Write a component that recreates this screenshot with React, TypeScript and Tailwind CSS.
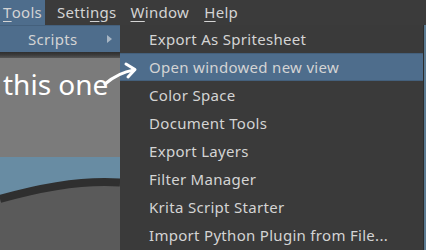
import React from "react";

const font = { fontFamily: '"Noto Sans", "Open Sans", sans-serif' };

function U({ children }: { children: React.ReactNode }) {
  return <span className="underline underline-offset-[3px] decoration-1">{children}</span>;
}

const items = [
  "Export As Spritesheet",
  "Open windowed new view",
  "Color Space",
  "Document Tools",
  "Export Layers",
  "Filter Manager",
  "Krita Script Starter",
  "Import Python Plugin from File...",
];

export default function App() {
  return (
    <div
      className="relative w-[426px] h-[250px] overflow-hidden bg-[#3a3a3a] text-[#d4d4d4] text-[15px] tracking-[0.3px] leading-none"
      style={font}
    >
      {/* menu bar */}
      <div className="flex h-[25px] items-stretch bg-[#3b3b3b]">
        <div className="flex items-center w-[45px] pl-[3px] bg-[#4e6d8c]">
          <U>T</U>ools
        </div>
        <div className="flex items-center pl-[12px]">
          Setti<U>n</U>gs
        </div>
        <div className="flex items-center pl-[14px]">
          <U>W</U>indow
        </div>
        <div className="flex items-center pl-[15px]">
          <U>H</U>elp
        </div>
      </div>

      <div className="flex h-[225px]">
        {/* left column: Tools submenu + canvas */}
        <div className="flex flex-col w-[120px] shrink-0">
          <div className="flex items-center h-[27px] bg-[#4e6d8c] pl-[28px] pr-[8px] border-t border-[#44607c]">
            <span className="flex-1">Scripts</span>
            <svg width="5" height="8" viewBox="0 0 5 8">
              <path d="M0 0 L5 4 L0 8 Z" fill="#a8b6c4" />
            </svg>
          </div>
          <div className="h-[6px] bg-gradient-to-b from-[#2e2e2e] via-[#3c3c3c] to-[#555555]" />
          <div className="flex flex-col flex-1 bg-[#7b7b7b]">
            <div className="pl-[3px] pt-[10px] text-[28px] tracking-normal leading-[32px] text-white">this one</div>
            <svg className="mt-auto" width="120" height="93" viewBox="0 0 120 93">
              <rect x="0" y="0" width="120" height="93" fill="#688ca3" />
              <path d="M0 42 Q70 22 120 25.5 L120 93 L0 93 Z" fill="#5a5a5a" />
              <path d="M0 42 Q70 22 120 25.5" stroke="#2f2f2f" strokeWidth="8" fill="none" />
            </svg>
          </div>
        </div>

        {/* Scripts submenu */}
        <div className="flex flex-col w-[304px] shrink-0 bg-[#3a3a3a] border-r border-[#2b2b2b]">
          {items.map((t, i) => (
            <div
              key={t}
              className={
                "flex items-center h-[28px] pl-[29px] shrink-0 " +
                (i === 1 ? "bg-[#4e6d8c] border-y border-[#44607c]" : "")
              }
            >
              {t}
            </div>
          ))}
        </div>
        <div className="flex-1 bg-[#5a7a92]" />
      </div>

      {/* annotation arrow overlay */}
      <svg className="absolute left-[100px] top-[58px]" width="40" height="32" viewBox="0 0 40 32">
        <path d="M5 26 C12 20 22 14 34 12" stroke="white" strokeWidth="3" fill="none" strokeLinecap="round" />
        <path d="M26 6 L35 11.5 L28 19" stroke="white" strokeWidth="3" fill="none" strokeLinecap="round" strokeLinejoin="round" />
      </svg>
    </div>
  );
}
